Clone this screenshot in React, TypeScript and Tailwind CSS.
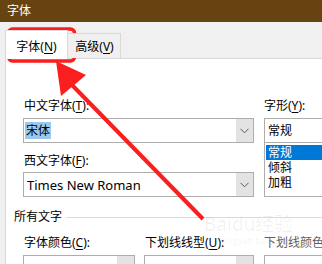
import React from "react";

const U = ({ c }: { c: string }) => <span className="underline underline-offset-[2px]">{c}</span>;

const Chevron = () => (
  <svg width="9" height="6" viewBox="0 0 9 6" className="block">
    <path d="M0.5 0.8 L4.5 4.8 L8.5 0.8" fill="none" stroke="#5a5a5a" strokeWidth="1" />
  </svg>
);

const Combo = ({ children, className = "" }: { children?: React.ReactNode; className?: string }) => (
  <div className={"flex h-[25px] border border-[#adadad] bg-white " + className}>
    <div className="flex flex-1 items-center overflow-hidden pl-[1px]">{children}</div>
    <div className="flex w-[17px] items-center justify-center bg-[#e3e3e3]">
      <Chevron />
    </div>
  </div>
);

export default function App() {
  return (
    <div
      className="relative h-[264px] w-[322px] overflow-hidden text-[12px] leading-[16px] text-black"
      style={{ fontFamily: '"Noto Sans", "Noto Sans CJK SC", sans-serif' }}
    >
      {/* title bar */}
      <div className="flex h-[22px] items-center bg-[#684312] pl-[7px] text-white">字体</div>

      <div className="flex h-[242px]">
        <div className="w-[2px] bg-[#684312]" />
        <div className="flex flex-1 flex-col bg-[#f0f0f0] pl-[5px] pt-[8px]">
          {/* tabs */}
          <div className="relative z-10 flex h-[28px] items-end">
            <div className="-mb-px flex h-[29px] w-[63px] items-center justify-center border border-b-0 border-[#d9d9d9] bg-white pt-[3px]">
              字体(<U c="N" />)
            </div>
            <div className="flex h-[25px] w-[53px] items-center justify-center border border-b-0 border-l-0 border-[#d9d9d9] bg-[#f0f0f0] pt-[1px] pl-[1px]">
              高级(<U c="V" />)
            </div>
          </div>

          {/* panel */}
          <div className="flex-1 border-l border-t border-[#d9d9d9] bg-white pl-[17px] pt-[39px]">
            <div className="flex gap-[10px]">
              <div className="w-[231px] shrink-0">
                <div className="pl-[1px]">
                  中文字体(<U c="T" />):
                </div>
                <Combo className="mt-[4px]">
                  <span className="bg-[#99c9ef] px-[1px] leading-[17px]">宋体</span>
                </Combo>
                <div className="mt-[10px] pl-[1px]">
                  西文字体(<U c="F" />):
                </div>
                <Combo className="mt-[3px]">
                  <span className="pl-[2px] text-[13px]">Times New Roman</span>
                </Combo>
              </div>
              <div className="w-[80px] shrink-0">
                <div>
                  字形(<U c="Y" />):
                </div>
                <div className="mt-[4px] flex h-[25px] items-center border border-[#adadad] pl-[3px]">常规</div>
                <div className="h-[54px] border border-t-0 border-[#adadad] pt-[2px] pl-[1px]">
                  <div className="h-[15px] bg-[#0078d7] pl-[2px] leading-[15px] text-white">常规</div>
                  <div className="h-[15px] pl-[2px] leading-[15px]">倾斜</div>
                  <div className="h-[15px] pl-[2px] leading-[15px]">加粗</div>
                </div>
              </div>
            </div>

            <div className="ml-[-9px] mt-[12px] flex items-center">
              <span>所有文字</span>
              <div className="ml-[4px] h-px flex-1 bg-[#dcdcdc]" />
            </div>

            <div className="mt-[10px] flex">
              <div className="w-[112px] shrink-0">
                <div className="pl-[1px]">
                  字体颜色(<U c="C" />):
                </div>
                <Combo className="mt-[4px]" />
              </div>
              <div className="ml-[9px] w-[110px] shrink-0">
                <div className="pl-[1px]">
                  下划线线型(<U c="U" />):
                </div>
                <Combo className="mt-[4px]">
                  <span className="pl-[3px] pt-[6px]">(无)</span>
                </Combo>
              </div>
              <div className="ml-[10px] w-[80px] shrink-0">
                <div className="whitespace-nowrap text-[#5f5f5f]">下划线颜色</div>
                <div className="mt-[4px] h-[25px] border border-[#adadad]" />
              </div>
            </div>
          </div>
        </div>
      </div>

      {/* watermark */}
      <div className="pointer-events-none absolute left-[204px] top-[214px] text-[19px] leading-[20px] text-[#000]/[0.06]">
        Baidu经验
      </div>
      <div className="pointer-events-none absolute left-[222px] top-[236px] text-[9px] leading-[10px] text-[#000]/[0.06]">
        jingyan.baidu.com
      </div>

      {/* annotation overlay */}
      <svg className="pointer-events-none absolute left-0 top-0" width="322" height="264" viewBox="0 0 322 264">
        <rect x="8.5" y="29" width="66" height="32" rx="4" fill="none" stroke="#fa1e1e" strokeWidth="3.5" />
        <line x1="72" y1="85" x2="203" y2="219" stroke="#fa1e1e" strokeWidth="4" />
        <polygon points="56,61 86,75 61,96" fill="#fa1e1e" />
      </svg>
    </div>
  );
}
